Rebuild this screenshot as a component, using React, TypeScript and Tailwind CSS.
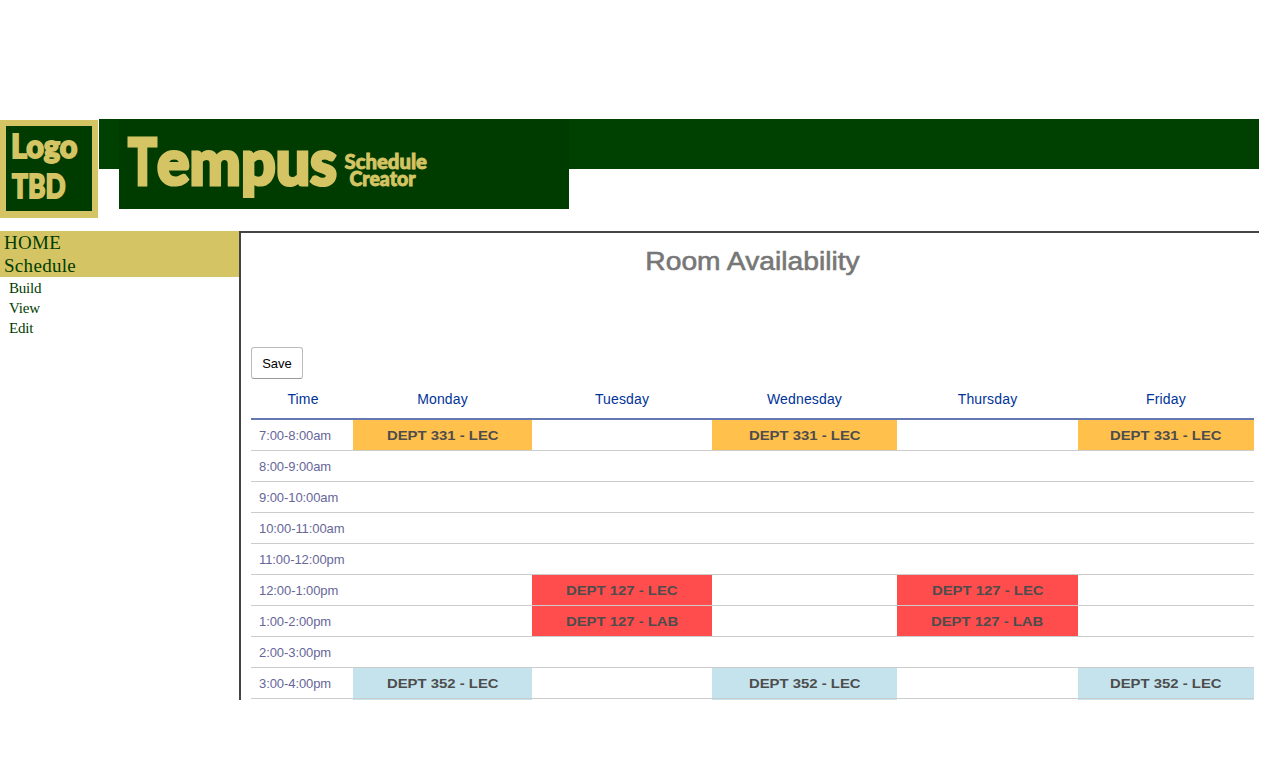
import React from "react";

const days = ["Monday", "Tuesday", "Wednesday", "Thursday", "Friday"];

type Course = { name: string; tone: string };

const orange = (name: string): Course => ({ name, tone: "bg-[#ffc04c]" });
const red = (name: string): Course => ({ name, tone: "bg-[#ff4c4c]" });
const blue = (name: string): Course => ({ name, tone: "bg-[#c5e3ed]" });

const rows: { time: string; cells: Record<string, Course> }[] = [
  {
    time: "7:00-8:00am",
    cells: {
      Monday: orange("DEPT 331 - LEC"),
      Wednesday: orange("DEPT 331 - LEC"),
      Friday: orange("DEPT 331 - LEC"),
    },
  },
  { time: "8:00-9:00am", cells: {} },
  { time: "9:00-10:00am", cells: {} },
  { time: "10:00-11:00am", cells: {} },
  { time: "11:00-12:00pm", cells: {} },
  { time: "12:00-1:00pm", cells: { Tuesday: red("DEPT 127 - LEC"), Thursday: red("DEPT 127 - LEC") } },
  { time: "1:00-2:00pm", cells: { Tuesday: red("DEPT 127 - LAB"), Thursday: red("DEPT 127 - LAB") } },
  { time: "2:00-3:00pm", cells: {} },
  {
    time: "3:00-4:00pm",
    cells: {
      Monday: blue("DEPT 352 - LEC"),
      Wednesday: blue("DEPT 352 - LEC"),
      Friday: blue("DEPT 352 - LEC"),
    },
  },
];

function Logo() {
  return (
    <svg
      className="mt-px h-[98px] w-[98px] shrink-0 font-['Lato',sans-serif] font-black"
      viewBox="0 0 98 98"
      fill="#d5c464"
      stroke="#d5c464"
    >
      <rect width="98" height="98" stroke="none" />
      <rect x="6" y="6" width="86" height="85" fill="#003c00" stroke="none" />
      <text x="11" y="37.500" fontSize="32" strokeWidth="1.800" textLength="66.500" lengthAdjust="spacingAndGlyphs">Logo</text>
      <text x="12" y="78" fontSize="32" strokeWidth="1.800" textLength="53.500" lengthAdjust="spacingAndGlyphs">TBD</text>
    </svg>
  );
}

function Banner() {
  return (
    <svg
      className="ml-5 h-[90px] w-[450px] font-['Lato',sans-serif] font-black"
      viewBox="0 0 450 90"
      fill="#d5c464"
      stroke="#d5c464"
    >
      <rect width="450" height="90" fill="#003c00" stroke="none" />
      <text y="66" fontSize="65" strokeWidth="3.200">
        <tspan x="9" textLength="29" lengthAdjust="spacingAndGlyphs">T</tspan>
        <tspan x="38" textLength="180" lengthAdjust="spacingAndGlyphs">empus</tspan>
      </text>
      <text x="225.500" y="50" fontSize="21" strokeWidth="0.9" textLength="82.500" lengthAdjust="spacingAndGlyphs">Schedule</text>
      <text x="230.500" y="67" fontSize="20.500" strokeWidth="0.9" textLength="66" lengthAdjust="spacingAndGlyphs">Creator</text>
    </svg>
  );
}

function Sidebar() {
  return (
    <nav className="w-[239px] shrink-0 font-['Liberation_Serif',serif] text-[#003c00]">
      <div className="bg-[#d5c464] pl-1 text-[19px] leading-[23px]">
        <div className="tracking-[0.3px]">HOME</div>
        <div className="tracking-[0.3px]">Schedule</div>
      </div>
      <ul className="pl-[9px] pt-px text-[15px] leading-5 tracking-[-0.2px]">
        <li>Build</li>
        <li>View</li>
        <li>Edit</li>
      </ul>
    </nav>
  );
}

function Timetable() {
  return (
    <table className="w-[1003px] table-fixed border-separate border-spacing-0">
      <colgroup>
        <col className="w-[102px]" />
        <col className="w-[179px]" />
        <col className="w-[180px]" />
        <col className="w-[185px]" />
        <col className="w-[181px]" />
        <col className="w-[176px]" />
      </colgroup>
      <thead>
        <tr className="h-[41px] text-[14px] leading-5 text-[#003399]">
          {["Time", ...days].map((label) => (
            <th key={label} className="border-b-2 border-[#6678b1] p-0 pb-[9px] align-bottom font-normal tracking-[0.15px] first:pl-0.5">
              {label}
            </th>
          ))}
        </tr>
      </thead>
      <tbody>
        {rows.map((row) => (
          <tr key={row.time} className="h-[31px]">
            <td className="border-b border-[#ccc] p-0 pl-2 pt-0.5 text-[13px] leading-[28px] tracking-[-0.08px] text-[#666699]">
              {row.time}
            </td>
            {days.map((day) => {
              const course = row.cells[day];
              return (
                <td
                  key={day}
                  className={`border-b border-[#ccc] bg-clip-padding p-0 pt-0.5 text-center text-[13px] font-bold leading-[28px] text-[#4d4d4d] ${course ? course.tone : ""}`}
                >
                  {course && <span className="inline-block scale-x-[1.145]">{course.name}</span>}
                </td>
              );
            })}
          </tr>
        ))}
        <tr className="h-px">
          <td className="p-0" />
          {days.map((day) => (
            <td key={day} className={`p-0 ${rows[rows.length - 1].cells[day]?.tone ?? ""}`} />
          ))}
        </tr>
      </tbody>
    </table>
  );
}

export default function App() {
  return (
    <div className="h-[760px] w-[1280px] overflow-hidden bg-white pt-[119px] font-['Liberation_Sans',Arial,sans-serif]">
      <header className="flex h-[112px] w-[1259px] items-start">
        <Logo />
        <div className="ml-px h-[50px] flex-1 bg-[#004000]">
          <Banner />
        </div>
      </header>
      <div className="flex h-[469px] w-[1259px] overflow-hidden">
        <Sidebar />
        <main className="flex-1 overflow-hidden border-l-2 border-t-2 border-[#444] pl-[10px]">
          <h1 className="mt-[11px] h-[34px] w-[1003px] scale-x-[1.085] text-center text-[26px] leading-[34px] text-[#777] [-webkit-text-stroke:0.6px_#777]">
            Room Availability
          </h1>
          <button className="mt-[69px] block h-8 w-[52px] rounded-[3px] border border-[#bbb] border-b-[#999] bg-white pt-0.5 text-center text-[13px] text-black">
            Save
          </button>
          <Timetable />
        </main>
      </div>
    </div>
  );
}
